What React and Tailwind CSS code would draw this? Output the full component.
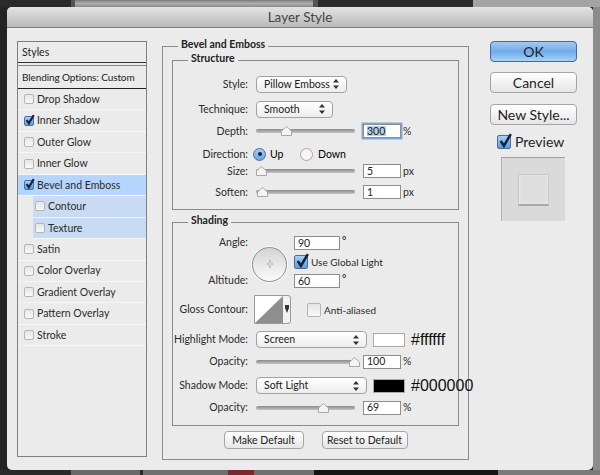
const font = "[font-family:'Lato',sans-serif]"

function Check({ big }) {
  if (big) {
    return (
      <svg className="absolute -left-[1px] -top-[4px]" width="17" height="18" viewBox="0 0 16 16">
        <path d="M3.5 8 L6.5 12.5 L13 1.5" fill="none" stroke="#12233f" strokeWidth="2.4" />
      </svg>
    )
  }
  return (
    <svg className="absolute -left-[1px] -top-[4px]" width="12" height="14" viewBox="0 0 16 16">
      <path d="M3.5 8 L6.5 12.5 L13 1.5" fill="none" stroke="#12233f" strokeWidth="2.8" />
    </svg>
  )
}

function Checkbox({ checked, big }) {
  const size = big ? "w-[14px] h-[14px]" : "w-[10px] h-[10px]"
  if (checked) {
    return (
      <span className={`relative shrink-0 rounded-[2px] border border-[#4a6f9f] bg-gradient-to-b from-[#a9cdf5] to-[#5f9be0] ${size}`}>
        <Check big={big} />
      </span>
    )
  }
  return <span className={`shrink-0 rounded-[2px] border border-[#b5b5b5] bg-gradient-to-b from-[#e6e6e6] to-[#f8f8f8] ${size}`} />
}

function StyleRow({ label, checked, active, sub }) {
  return (
    <div className={`flex h-[21.45px] shrink-0 items-center border-b border-[#f7f7f7] ${active ? "bg-[#b5d5fd]" : sub ? "ml-[15px] bg-[#c9dbf2]" : ""} ${sub ? "pl-[2px]" : "pl-[6px]"}`}>
      <Checkbox checked={checked} />
      <span className="ml-[3px] text-[#2b2b2b]">{label}</span>
    </div>
  )
}

function Select({ label, className }) {
  return (
    <div className={`flex h-[17px] shrink-0 items-center justify-between whitespace-nowrap rounded-[4px] border border-[#a2a2a2] bg-gradient-to-b from-[#ffffff] to-[#ededed] pl-[7px] pr-[7px] text-[#222] ${className}`}>
      <span>{label}</span>
      <svg width="6" height="10" viewBox="0 0 6 10"><path d="M3 0 L6 3.6 H0 Z M3 10 L6 6.4 H0 Z" fill="#333" /></svg>
    </div>
  )
}

function Slider({ pos }) {
  return (
    <div className="relative h-[4px] w-[99px] rounded-full bg-gradient-to-b from-[#8b8b8b] to-[#c4c4c4]">
      <svg className="absolute -top-[3px]" style={{ left: pos }} width="11" height="10" viewBox="0 0 11 10">
        <path d="M5.5 .5 L10.5 5 V9.5 H.5 V5 Z" fill="#f4f4f4" stroke="#a8a8a8" />
      </svg>
    </div>
  )
}

function NumInput({ value, focus, className = "" }) {
  return (
    <div className={`flex h-[14px] w-[38px] items-center border border-[#8d8d8d] bg-white pl-[3px] text-[#222] ${focus ? "shadow-[0_0_0_1.5px_#7cacdc]" : ""} ${className}`}>
      {focus ? <span className="bg-[#b4d0ea] pr-[1px]">{value}</span> : value}
    </div>
  )
}

function Row({ label, height, children }) {
  return (
    <div className={`flex items-center ${height}`}>
      <div className="w-[75px] shrink-0 whitespace-nowrap text-right text-[#2b2b2b]">{label}</div>
      <div className="ml-[8px] flex items-center">{children}</div>
    </div>
  )
}

function SliderRow({ label, height, pos, value, unit, focus }) {
  return (
    <Row label={label} height={height}>
      <Slider pos={pos} />
      <NumInput value={value} focus={focus} className="ml-[8px]" />
      <span className="ml-[2px] text-[#2b2b2b]">{unit}</span>
    </Row>
  )
}

function Button({ label, primary, className }) {
  return (
    <div className={`flex items-center justify-center whitespace-nowrap rounded-[4px] border ${primary ? "border-[#3f6a9c] bg-gradient-to-b from-[#a5c9f0] via-[#6eaaea] to-[#a9d2f7]" : "border-[#a5a5a5] bg-gradient-to-b from-[#ffffff] to-[#e6e6e6]"} ${className}`}>
      {label}
    </div>
  )
}

function Radio({ on }) {
  return (
    <span className={`flex h-[13px] w-[13px] shrink-0 items-center justify-center rounded-full border ${on ? "border-[#4a6f9f] bg-gradient-to-b from-[#a9cdf5] to-[#6aa3e4]" : "border-[#a5a5a5] bg-[#f6f6f6]"}`}>
      {on && <span className="h-[4px] w-[4px] rounded-full bg-[#12233f]" />}
    </span>
  )
}

export default function App() {
  return (
    <div className={`flex h-[475px] w-[600px] flex-col overflow-hidden bg-[#272727] text-[10.5px] leading-none ${font}`}>
      <div className="flex h-[7px] shrink-0">
        <div className="w-[71px] bg-[#2a2a2a]" />
        <div className="w-[4px] bg-[#555]" />
        <div className="w-[238px] bg-gradient-to-b from-[#7c7c7c] via-[#adadad] to-[#8a8a8a]" />
        <div className="w-[5px] bg-[#555]" />
        <div className="w-[155px] bg-[#2b2b2b]" />
        <div className="flex-1 bg-[#a4a4a4]" />
      </div>

      <div className="flex h-[463px] shrink-0">
        <div className="w-[7px] bg-[#242424]" />
        <div className="flex w-[586px] flex-col rounded-[5px] bg-[#ebebeb]">
          <div className="flex h-[21px] shrink-0 items-center justify-center rounded-t-[5px] border-b border-[#7a7a7a] bg-gradient-to-b from-[#e4e4e4] to-[#b9b9b9] pt-[2px] text-[13.5px] text-[#444]">
            Layer Style
          </div>

          <div className="flex pl-[10px] pt-[13px]">
            <div className="flex h-[416px] w-[130px] shrink-0 flex-col border-[1.5px] border-[#7f7f7f]">
              <div className="flex h-[21px] shrink-0 items-center border-b-[1.5px] border-[#333] pl-[4px] text-[#222]">Styles</div>
              <div className="mt-[2px] flex h-[24px] shrink-0 items-center whitespace-nowrap border-b-[1.5px] border-t border-b-[#222] border-t-[#888] pl-[4px] text-[10px] tracking-[-0.1px] text-[#222]">Blending Options: Custom</div>
              <StyleRow label="Drop Shadow" />
              <StyleRow label="Inner Shadow" checked />
              <StyleRow label="Outer Glow" />
              <StyleRow label="Inner Glow" />
              <StyleRow label="Bevel and Emboss" checked active />
              <StyleRow label="Contour" sub />
              <StyleRow label="Texture" sub />
              <StyleRow label="Satin" />
              <StyleRow label="Color Overlay" />
              <StyleRow label="Gradient Overlay" />
              <StyleRow label="Pattern Overlay" />
              <StyleRow label="Stroke" />
            </div>

            <fieldset className="-mt-[2px] ml-[15px] h-[421px] w-[307px] min-w-0 shrink-0 border border-[#8a8a8a] px-[9px]">
              <legend className="ml-[6px] h-[14px] px-[3px] font-bold text-[#222]">Bevel and Emboss</legend>

              <fieldset className="h-[157px] min-w-0 border border-[#8a8a8a]">
                <legend className="ml-[15px] h-[14px] px-[3px] font-bold text-[#222]">Structure</legend>
                <div className="pt-[4px]">
                  <Row label="Style:" height="h-[26px]"><Select label="Pillow Emboss" className="w-[91px]" /></Row>
                  <Row label="Technique:" height="h-[24px]"><Select label="Smooth" className="w-[77px]" /></Row>
                  <SliderRow label="Depth:" height="h-[20px]" pos={25} value="300" unit="%" focus />
                  <div className="pt-[3px]">
                    <Row label="Direction:" height="h-[20px]">
                      <div className="-ml-[3px] flex items-center">
                        <Radio on />
                        <span className="ml-[4px] w-[30px]">Up</span>
                        <Radio />
                        <span className="ml-[5px]">Down</span>
                      </div>
                    </Row>
                  </div>
                  <SliderRow label="Size:" height="h-[14px]" pos={0} value="5" unit="px" />
                  <SliderRow label="Soften:" height="h-[28px]" pos={1} value="1" unit="px" />
                </div>
              </fieldset>

              <fieldset className="mt-[5px] h-[211px] min-w-0 border border-[#8a8a8a]">
                <legend className="ml-[15px] h-[14px] px-[3px] font-bold text-[#222]">Shading</legend>
                <div className="flex h-[60px] pt-[7px]">
                  <div className="flex w-[75px] flex-col pt-[1px] text-right text-[#2b2b2b]">
                    <span>Angle:</span>
                    <span className="mt-[27px]">Altitude:</span>
                  </div>
                  <div className="ml-[4px] mt-[11px] flex h-[35px] w-[35px] items-center justify-center rounded-full border-[1.5px] border-[#8d8d8d] bg-gradient-to-b from-[#d4d4d4] to-[#fbfbfb] shadow-[0_0_0_1px_#f8f8f8]">
                    <svg width="10" height="10" viewBox="0 0 10 10"><path d="M5 0v3M5 5v3M2 4h2M6 4h2" stroke="#999" strokeWidth="1" /></svg>
                  </div>
                  <div className="ml-[7px] flex flex-col">
                    <div className="flex">
                      <NumInput value="90" className="w-[46px]" />
                      <span className="ml-[2px]">°</span>
                    </div>
                    <div className="mt-[5px] flex h-[14px] items-center whitespace-nowrap text-[10px]">
                      <Checkbox checked big />
                      <span className="ml-[3px] text-[#2b2b2b]">Use Global Light</span>
                    </div>
                    <div className="mt-[5px] flex">
                      <NumInput value="60" className="w-[46px]" />
                      <span className="ml-[2px]">°</span>
                    </div>
                  </div>
                </div>

                <div className="mt-[6px] flex h-[29px] items-center">
                  <div className="w-[75px] shrink-0 whitespace-nowrap text-right text-[#2b2b2b]">Gloss Contour:</div>
                  <div className="ml-[6px] flex h-[29px] w-[37px] shrink-0 overflow-hidden rounded-r-[3px] border border-[#9a9a9a] bg-[#f2f2f2]">
                    <svg width="28" height="27" viewBox="0 0 28 27" className="bg-white">
                      <path d="M0 27 L28 0 V27 Z" fill="#8e8e8e" />
                    </svg>
                    <div className="flex flex-1 justify-center pt-[9px]">
                      <svg width="4" height="8" viewBox="0 0 4 8"><path d="M0 0H4V3L2 8L0 3Z" fill="#333" /></svg>
                    </div>
                  </div>
                  <div className="ml-[16px] flex items-center text-[10px]">
                    <Checkbox big />
                    <span className="ml-[3px] text-[#2b2b2b]">Anti-aliased</span>
                  </div>
                </div>

                <div className="mt-[1px] flex h-[29px] items-center">
                  <div className="w-[75px] shrink-0 whitespace-nowrap text-right text-[#2b2b2b]">Highlight Mode:</div>
                  <Select label="Screen" className="ml-[8px] w-[111px]" />
                  <div className="ml-[6px] h-[14px] w-[32px] shrink-0 border border-[#aaa] bg-white" />
                  <span className="ml-[6px] whitespace-nowrap font-['Liberation_Sans',sans-serif] text-[16px] text-[#111]">#ffffff</span>
                </div>
                <SliderRow label="Opacity:" height="h-[15px]" pos={93} value="100" unit="%" />
                <div className="flex h-[33px] items-center">
                  <div className="w-[75px] shrink-0 whitespace-nowrap text-right text-[#2b2b2b]">Shadow Mode:</div>
                  <Select label="Soft Light" className="ml-[8px] w-[111px]" />
                  <div className="ml-[6px] h-[14px] w-[32px] shrink-0 border border-[#aaa] bg-black" />
                  <span className="ml-[6px] whitespace-nowrap font-['Liberation_Sans',sans-serif] text-[16px] text-[#111]">#000000</span>
                </div>
                <SliderRow label="Opacity:" height="h-[11px]" pos={62} value="69" unit="%" />
              </fieldset>

              <div className="mt-[5px] flex justify-center gap-[18px] text-[#222]">
                <Button label="Make Default" className="h-[18px] w-[80px]" />
                <Button label="Reset to Default" className="h-[18px] w-[86px]" />
              </div>
            </fieldset>

            <div className="ml-[21px] flex w-[87px] shrink-0 flex-col text-[14px] text-[#1f1f1f]">
              <Button label="OK" primary className="h-[21px]" />
              <Button label="Cancel" className="mt-[10px] h-[21px]" />
              <Button label="New Style..." className="mt-[11px] h-[21px]" />
              <div className="mt-[10px] flex items-center pl-[7px]">
                <Checkbox checked big />
                <span className="ml-[4px]">Preview</span>
              </div>
              <div className="ml-[11px] mt-[8px] flex h-[64px] w-[64px] items-center justify-center border-l border-t border-l-[#b0b0b0] border-t-[#a0a0a0] bg-[#dadada]">
                <div className="h-[32px] w-[31px] border border-b-2 border-[#c8c8c8] border-b-[#a8a8a8] bg-[#dedede] shadow-[inset_0_0_3px_#f4f4f4]" />
              </div>
            </div>
          </div>
        </div>
        <div className="w-[7px] bg-[#8c8c8c]" />
      </div>

      <div className="flex h-[5px] shrink-0">
        <div className="w-[71px] bg-[#2a2a2a]" />
        <div className="w-[69px] bg-[#6a6a6a]" />
        <div className="w-[3px] bg-[#2a2a2a]" />
        <div className="w-[85px] bg-[#6f6f6f]" />
        <div className="w-[26px] bg-[#7a2a2e]" />
        <div className="w-[60px] bg-[#6f6f6f]" />
        <div className="w-[184px] bg-[#141414]" />
        <div className="flex-1 bg-[#7a7a7a]" />
      </div>
    </div>
  )
}
